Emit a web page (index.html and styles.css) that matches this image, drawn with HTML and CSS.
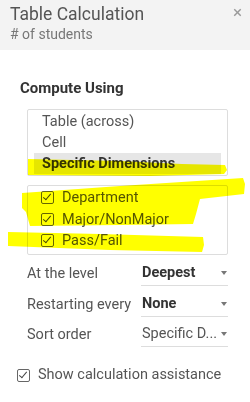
FILE: index.html
```html
<!DOCTYPE html>
<html lang="en">
<head>
  <meta charset="UTF-8" />
  <title>Table Calculation</title>
  <link rel="stylesheet" href="styles.css">
</head>
<body>
  <div class="header">
    <div class="title">Table Calculation</div>
    <div class="subtitle"># of students</div>
    <span class="close">&times;</span>
  </div>

  <div class="content">
    <h2>Compute Using</h2>

    <ul class="listbox">
      <li>Table (across)</li>
      <li>Cell</li>
      <li class="selected">Specific Dimensions</li>
    </ul>

    <ul class="checklist">
      <li><span class="check"></span>Department</li>
      <li><span class="check"></span>Major/NonMajor</li>
      <li><span class="check"></span>Pass/Fail</li>
    </ul>

    <div class="field">
      <span class="label">At the level</span>
      <span class="select bold">Deepest<i class="arrow"></i></span>
    </div>
    <div class="field">
      <span class="label">Restarting every</span>
      <span class="select bold">None<i class="arrow"></i></span>
    </div>
    <div class="field">
      <span class="label">Sort order</span>
      <span class="select">Specific D...<i class="arrow"></i></span>
    </div>

    <label class="assist"><span class="check"></span>Show calculation assistance</label>
  </div>

  <!-- highlighter marks drawn over the panel -->
  <svg class="marks" width="250" height="402" viewBox="0 0 250 402">
    <polygon points="28,159 120,161 182,164 225,165 227,170 224,174 150,176 28,175" />
    <polygon points="22,193 120,186 243,178 245,184 244,194 200,199 196,214 193,224 120,225 30,226 26,212 22,208" />
    <polygon points="8,232 100,234 203,237 204,245 202,252 110,250 8,246" />
  </svg>
</body>
</html>
```

FILE: styles.css
```css
body {
  margin: 0;
  width: 250px;
  height: 402px;
  background: #fff;
  font-family: Roboto, "Open Sans", sans-serif;
  color: #333;
  position: relative;
  overflow: hidden;
}

.header {
  position: relative;
  height: 50px;
  box-sizing: border-box;
  padding: 3px 10px 0;
  background: #f3f3f3;
}
.title {
  font-size: 17.5px;
  color: #555;
  line-height: 22px;
}
.subtitle {
  font-size: 14px;
  color: #777;
  line-height: 18px;
}
.close {
  position: absolute;
  right: 8px;
  top: 2px;
  font-size: 17px;
  color: #999;
}

.content {
  padding: 29px 22px 0 27px;
}
h2 {
  margin: 0 0 12px -7px;
  font-size: 15px;
  font-weight: bold;
  color: #333;
  line-height: 18px;
}

ul {
  list-style: none;
  margin: 0;
  border: 1px solid #ddd;
  border-radius: 2px;
}
.listbox {
  padding: 1px 6px 0;
  height: 64px;
  margin-bottom: 9px;
}
.listbox li {
  height: 21px;
  line-height: 21px;
  padding-left: 8px;
  font-size: 14.5px;
  color: #555;
}
.listbox li.selected {
  background: #e6e6e6;
  font-weight: bold;
  color: #333;
}

.checklist {
  padding: 1px 0 2px 13px;
  margin-bottom: 1px;
}
.checklist li {
  display: flex;
  align-items: center;
  height: 21.5px;
  font-size: 14.5px;
  color: #555;
}

.check {
  position: relative;
  width: 11px;
  height: 11px;
  border: 1px solid #666;
  border-radius: 2px;
  margin-right: 8px;
  flex: none;
}
.check::after {
  content: "";
  position: absolute;
  left: 3px;
  top: 0px;
  width: 3px;
  height: 7px;
  border: solid #444;
  border-width: 0 1.5px 1.5px 0;
  transform: rotate(40deg);
}

.field {
  display: flex;
  align-items: flex-end;
  height: 30.5px;
  font-size: 14.5px;
  line-height: 18px;
}
.label {
  width: 114px;
  color: #555;
  padding-bottom: 3px;
  white-space: nowrap;
}
.select {
  position: relative;
  flex: 1;
  border-bottom: 1px solid #ddd;
  padding: 0 0 3px 1px;
  color: #555;
  white-space: nowrap;
}
.select.bold {
  font-weight: bold;
  color: #333;
}
.arrow {
  position: absolute;
  right: 1px;
  top: 7px;
  border: 3.5px solid transparent;
  border-top: 4px solid #777;
}

.assist {
  display: flex;
  align-items: center;
  margin: 19px 0 0 -10px;
  font-size: 14.5px;
  line-height: 18px;
  color: #555;
}

.marks {
  position: absolute;
  left: 0;
  top: 0;
  pointer-events: none;
  mix-blend-mode: multiply;
}
.marks polygon {
  fill: #ffff00;
}
```
